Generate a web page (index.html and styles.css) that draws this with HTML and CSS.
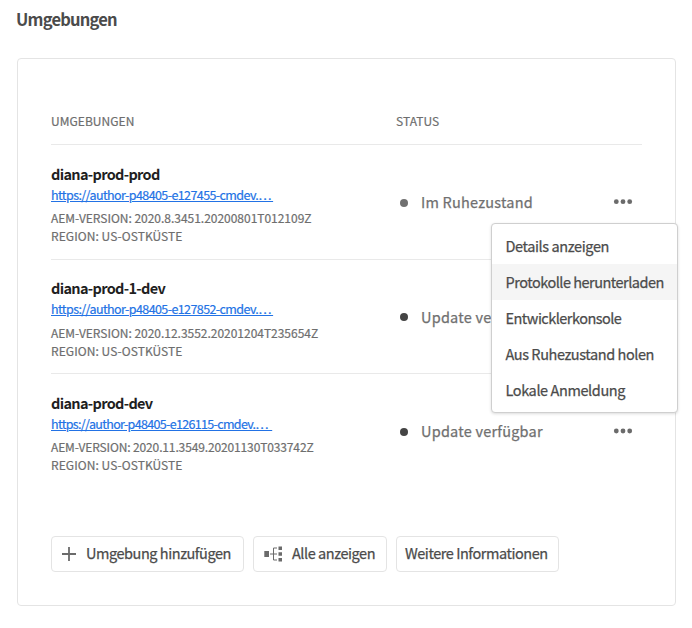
FILE: index.html
```html
<!DOCTYPE html>
<html lang="de">
<head>
<meta charset="utf-8">
<title>Umgebungen</title>
<link rel="stylesheet" href="styles.css">
</head>
<body>
<h1 class="heading">Umgebungen</h1>
<main class="card">
  <div class="row head"><span>UMGEBUNGEN</span><span>STATUS</span></div>
  <section class="row env">
    <div class="info">
      <h2 class="name">diana-prod-prod</h2>
      <a class="link" href="#">https://author-p48405-e127455-cmdev.…&nbsp;</a>
      <p class="meta">AEM-VERSION: 2020.8.3451.20200801T012109Z</p>
      <p class="meta region">REGION: US-OSTKÜSTE</p>
    </div>
    <div class="status"><i class="dot idle"></i><span>Im Ruhezustand</span></div>
    <div class="more">
      <svg width="20" height="6" viewBox="0 0 20 6"><circle cx="3.3" cy="2.7" r="2.4"/><circle cx="10" cy="2.7" r="2.4"/><circle cx="16.7" cy="2.7" r="2.4"/></svg>
      <ul class="menu">
        <li><span class="m1">Details anzeigen</span></li>
        <li class="active"><span class="m2">Protokolle herunterladen</span></li>
        <li><span class="m3">Entwicklerkonsole</span></li>
        <li><span class="m4">Aus Ruhezustand holen</span></li>
        <li><span class="m5">Lokale Anmeldung</span></li>
      </ul>
    </div>
  </section>
  <section class="row env">
    <div class="info">
      <h2 class="name">diana-prod-1-dev</h2>
      <a class="link" href="#">https://author-p48405-e127852-cmdev.…&nbsp;</a>
      <p class="meta">AEM-VERSION: 2020.12.3552.20201204T235654Z</p>
      <p class="meta region">REGION: US-OSTKÜSTE</p>
    </div>
    <div class="status"><i class="dot"></i><span>Update verfügbar</span></div>
  </section>
  <section class="row env">
    <div class="info">
      <h2 class="name">diana-prod-dev</h2>
      <a class="link tight" href="#">https://author-p48405-e126115-cmdev.…&nbsp;&nbsp;</a>
      <p class="meta snug">AEM-VERSION: 2020.11.3549.20201130T033742Z</p>
      <p class="meta region">REGION: US-OSTKÜSTE</p>
    </div>
    <div class="status"><i class="dot"></i><span>Update verfügbar</span></div>
    <div class="more">
      <svg width="20" height="6" viewBox="0 0 20 6"><circle cx="3.3" cy="3" r="2.4"/><circle cx="10" cy="3" r="2.4"/><circle cx="16.7" cy="3" r="2.4"/></svg>
    </div>
  </section>
  <div class="actions">
    <button class="btn add"><svg width="14" height="14" viewBox="0 0 14 14"><path d="M6.1 0h1.8v6.1H14v1.8H7.9V14H6.1V7.9H0V6.1h6.1z"/></svg><span>Umgebung hinzufügen</span></button>
    <button class="btn all"><svg width="19" height="16" viewBox="0 0 19 16"><path d="M.3 5h4.700v6H.3zM14.500 .500H18V4h-3.500zM14.500 6.200H18v3.500h-3.500zM14.500 12H18v3.500h-3.500z"/><path class="wire" d="M6 8h7M13 2H9.500v12H13"/></svg><span>Alle anzeigen</span></button>
    <button class="btn info-btn"><span>Weitere Informationen</span></button>
  </div>
</main>
</body>
</html>
```

FILE: styles.css
```css
* { box-sizing: border-box; }
body {
  margin: 0;
  padding: 7px 16px 0 17px;
  background: #fff;
  color: #4b4b4b;
  font-family: "Noto Sans CJK SC", "Noto Sans", sans-serif;
  font-weight: 400;
}
h1, h2, p, ul { margin: 0; padding: 0; }
.heading { font-size: 16.5px; line-height: 24px; font-weight: 700; height: 51px; margin-left: -1px; letter-spacing: -.8px; }
.card {
  height: 548px;
  padding: 52px 33px 0;
  border: 1px solid #e4e4e4;
  border-radius: 4px;
}
.row {
  display: grid;
  grid-template-columns: 345px 217px 1fr;
  border-bottom: 1px solid #e9e9e9;
  white-space: nowrap;
}
.row:nth-last-child(2) { border-bottom: 0; }
.head { height: 34px; line-height: 20px; font-size: 12px; color: #6e6e6e; letter-spacing: .05px; -webkit-text-stroke: .2px; }
.env { height: 114.67px; padding-top: 17.5px; }
.name { font-size: 14.5px; line-height: 22px; font-weight: 700; color: #1f1f1f; letter-spacing: -.67px; }
.link { display: block; width: fit-content; font-size: 12.5px; line-height: 20px; color: #2272e5; letter-spacing: -.59px; -webkit-text-stroke: .2px; }
.tight { letter-spacing: -.67px; }
.info .link + .meta { margin-top: 4.5px; }
.meta { font-size: 12px; line-height: 18px; color: #6e6e6e; letter-spacing: -.02px; -webkit-text-stroke: .2px; }
.snug { letter-spacing: -.13px; }
.region { letter-spacing: .06px; }
.status { display: flex; align-items: center; height: 22px; margin-top: 29px; font-size: 14.5px; color: #707070; letter-spacing: .22px; -webkit-text-stroke: .25px; }
.status span { margin-top: -2px; }
.dot { width: 8px; height: 8px; border-radius: 50%; background: #444; margin: 0 13px 0 4px; }
.idle { background: #707070; }
.more { position: relative; margin-top: 36.5px; height: 6px; }
svg { display: block; fill: #6b6b6b; flex: none; }
.menu {
  position: absolute;
  z-index: 2;
  left: -122px;
  top: 24px;
  width: 187px;
  height: 190px;
  padding: 4px 0;
  list-style: none;
  background: #fff;
  border: 1px solid #cfcfcf;
  border-radius: 4px;
  box-shadow: 0 1px 3px rgba(0, 0, 0, .14);
  font-size: 14.5px;
  line-height: 36px;
  -webkit-text-stroke: .25px;
}
.menu li { height: 36px; padding-left: 13.5px; }
.m1 { letter-spacing: -.4px; }
.m2 { letter-spacing: -.5px; }
.m3 { letter-spacing: -.52px; }
.m4 { letter-spacing: -.42px; }
.m5 { letter-spacing: -.4px; }
.active { background: #f5f5f5; }
.actions { display: flex; gap: 9px; margin-top: 47px; }
.btn {
  display: flex;
  align-items: center;
  height: 36px;
  padding: 0 0 0 10px;
  border: 1px solid #e4e4e4;
  border-radius: 4px;
  background: #fff;
  font: inherit;
  font-size: 14.5px;
  letter-spacing: -.45px;
  -webkit-text-stroke: .25px;
  color: #4b4b4b;
  white-space: nowrap;
}
.btn span { margin-top: -2px; }
.add { width: 193px; gap: 10px; }
.all { width: 134px; gap: 9px; }
.info-btn { width: 163px; padding-left: 8px; }
.wire { fill: none; stroke: #6b6b6b; stroke-width: 1; }
```
